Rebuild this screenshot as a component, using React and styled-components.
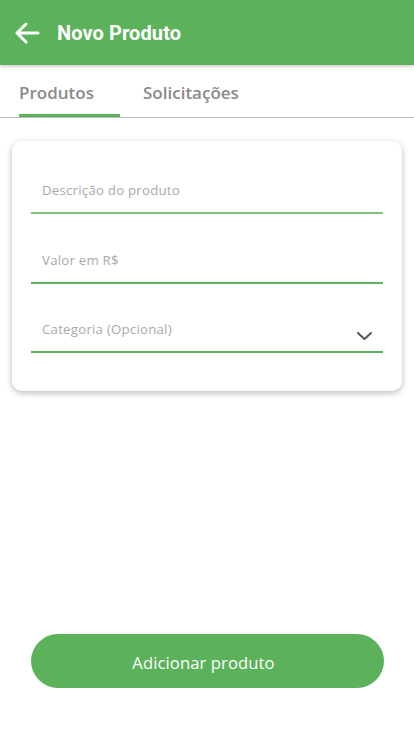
import React from "react";
import styled, { createGlobalStyle } from "styled-components";

const Global = createGlobalStyle`
  html, body { margin: 0; padding: 0; background: #fff; }
  body { font-family: "Open Sans", "Noto Sans", sans-serif; }
  * { box-sizing: border-box; }
`;

const Page = styled.div`
  width: 414px;
  height: 736px;
  display: flex;
  flex-direction: column;
  background: #fff;
`;

const Header = styled.header`
  height: 65px;
  background: #5cb25a;
  display: flex;
  align-items: center;
  padding-left: 14px;
  gap: 17px;
  box-shadow: 0 2px 3px rgba(0, 0, 0, 0.18);
  position: relative;
  z-index: 1;
`;

const Title = styled.h1`
  margin: 0;
  font-family: Roboto, "Noto Sans", sans-serif;
  font-weight: 700;
  font-size: 20px;
  color: #fff;
  letter-spacing: 0.1px;
`;

const Tabs = styled.nav`
  display: flex;
  padding-left: 19px;
  gap: 23px;
  height: 53px;
  border-bottom: 1px solid #bdbdbd;
`;

const Tab = styled.div`
  width: ${(p) => p.$w}px;
  display: flex;
  align-items: center;
  font-family: "Open Sans", sans-serif;
  font-weight: 600;
  font-size: 17px;
  color: #8a8a8a;
  padding-top: 6px;
  border-bottom: 3px solid ${(p) => (p.$active ? "#5cb25a" : "transparent")};
`;

const Card = styled.section`
  margin: 23px 12px 0;
  height: 250px;
  background: #fff;
  border-radius: 10px;
  box-shadow: 0 2px 6px rgba(0, 0, 0, 0.28);
  padding: 23px 19px 0;
  display: flex;
  flex-direction: column;
  gap: 19.5px;
`;

const Field = styled.div`
  height: 50px;
  display: flex;
  align-items: flex-start;
  justify-content: space-between;
  padding: 17px 10px 0 11px;
  border-bottom: 2px solid ${(p) => p.$line};
`;

const Placeholder = styled.span`
  font-size: 13.3px;
  color: #a9a9a9;
  letter-spacing: 0.2px;
`;

const Chevron = styled.svg`
  margin-top: 11px;
  width: 17px;
  height: 10px;
`;

const Spacer = styled.div`
  flex: 1;
`;

const Button = styled.button`
  margin: 0 30px 48px 31px;
  height: 54px;
  border: none;
  border-radius: 27px;
  background: #5cb25a;
  color: #fff;
  font-family: "Open Sans", sans-serif;
  font-size: 16.6px;
  letter-spacing: 0.1px;
  padding: 2px 8px 0 0;
`;

export default function App() {
  return (
    <>
      <Global />
      <Page>
        <Header>
          <svg width="26" height="22" viewBox="0 0 26 22" fill="none">
            <path d="M24 11H3M12 2L3 11l9 9" stroke="#fff" strokeWidth="3" strokeLinecap="round" strokeLinejoin="round" />
          </svg>
          <Title>Novo Produto</Title>
        </Header>
        <Tabs>
          <Tab $active $w={101}>Produtos</Tab>
          <Tab $w={120}>Solicitações</Tab>
        </Tabs>
        <Card>
          <Field $line="#7dc47b">
            <Placeholder>Descrição do produto</Placeholder>
          </Field>
          <Field $line="#5cb25a">
            <Placeholder>Valor em R$</Placeholder>
          </Field>
          <Field $line="#5cb25a">
            <Placeholder>Categoria (Opcional)</Placeholder>
            <Chevron viewBox="0 0 17 10" fill="none">
              <path d="M2 2l6.5 6 6.5-6" stroke="#555" strokeWidth="2" strokeLinecap="round" strokeLinejoin="round" />
            </Chevron>
          </Field>
        </Card>
        <Spacer />
        <Button>Adicionar produto</Button>
      </Page>
    </>
  );
}
